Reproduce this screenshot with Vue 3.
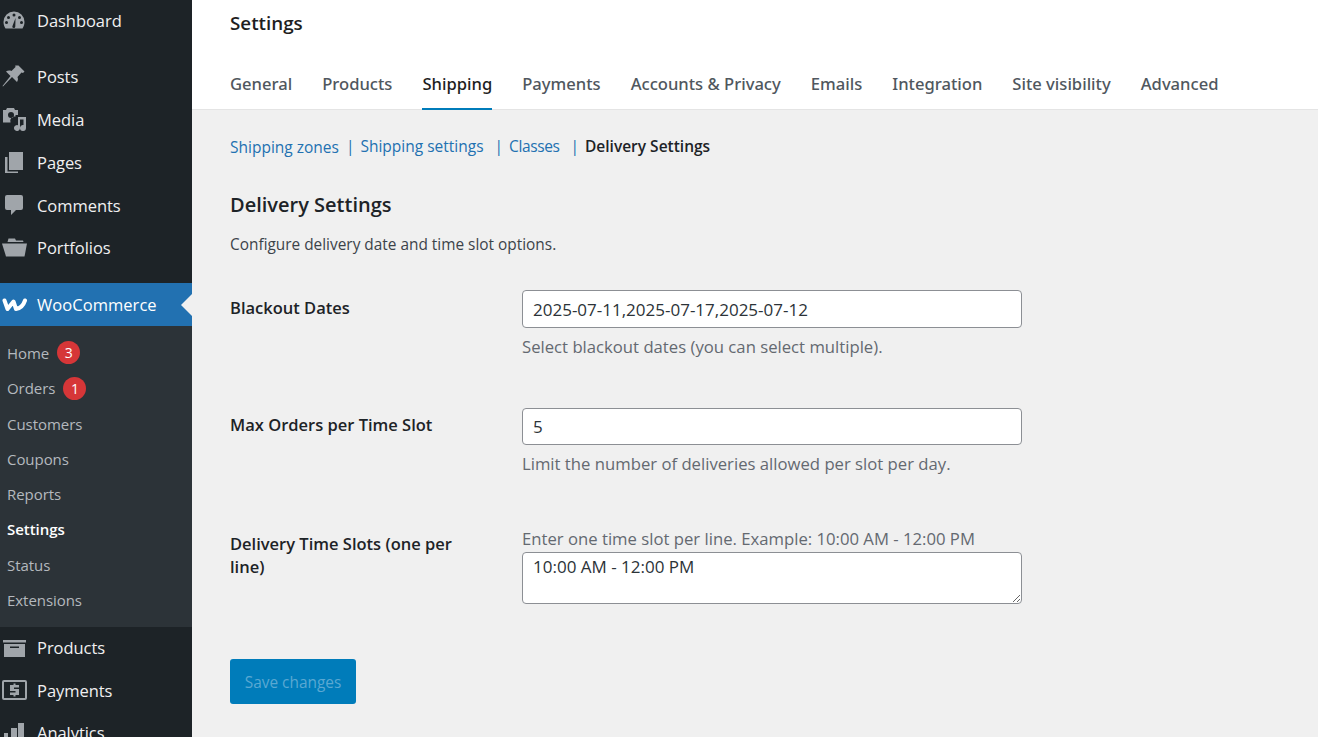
<template>
  <div class="page">
    <!-- admin sidebar -->
    <aside class="sidebar">
      <ul class="menu">
        <li v-for="item in topItems" :key="item.name" class="menu-item">
          <span class="menu-icon">
            <svg width="26" height="24" viewBox="0 0 26 24" fill="#a0a5aa" v-html="item.icon"></svg>
          </span>
          {{ item.name }}
        </li>
      </ul>
      <div class="menu-current">
        <span class="menu-icon">
          <svg width="26" height="16" viewBox="0 0 26 16" fill="none" stroke="#fff" stroke-width="4" stroke-linecap="round" stroke-linejoin="round">
            <path d="M2.500 3.500L5.500 12L11.500 4.500L14 12Q20.500 11 23 3.500" />
          </svg>
        </span>
        WooCommerce
        <span class="current-arrow"></span>
      </div>
      <ul class="submenu">
        <li
          v-for="sub in subItems"
          :key="sub.name"
          class="submenu-item"
          :class="{ active: sub.name === 'Settings' }"
        >
          {{ sub.name }}
          <span v-if="sub.count" class="badge">{{ sub.count }}</span>
        </li>
      </ul>
      <ul class="menu bottom">
        <li v-for="item in bottomItems" :key="item.name" class="menu-item">
          <span class="menu-icon">
            <svg width="26" height="24" viewBox="0 0 26 24" fill="#a0a5aa" v-html="item.icon"></svg>
          </span>
          {{ item.name }}
        </li>
      </ul>
    </aside>

    <main class="main">
      <header class="top">
        <h1 class="top-title">Settings</h1>
        <nav class="tabs">
          <a v-for="tab in tabs" :key="tab" class="tab" :class="{ active: tab === 'Shipping' }">{{ tab }}</a>
        </nav>
      </header>

      <div class="content">
        <div class="subnav">
          <a class="link zones">Shipping zones</a><span class="sep">|</span>
          <a class="link">Shipping settings</a><span class="sep wide">|</span>
          <a class="link classes">Classes</a><span class="sep wide">|</span>
          <strong class="current">Delivery Settings</strong>
        </div>

        <h2 class="section-title">Delivery Settings</h2>
        <p class="section-desc">Configure delivery date and time slot options.</p>

        <div class="form-row first">
          <label class="field-label">Blackout Dates</label>
          <div class="field">
            <input class="input" type="text" readonly value="2025-07-11,2025-07-17,2025-07-12" />
            <p class="hint">Select blackout dates (you can select multiple).</p>
          </div>
        </div>

        <div class="form-row second">
          <label class="field-label orders">Max Orders per Time Slot</label>
          <div class="field">
            <input class="input small" type="text" readonly value="5" />
            <p class="hint">Limit the number of deliveries allowed per slot per day.</p>
          </div>
        </div>

        <div class="form-row third">
          <label class="field-label slots">Delivery Time Slots (one per line)</label>
          <div class="field">
            <p class="hint above">Enter one time slot per line. Example: 10:00 AM - 12:00 PM</p>
            <textarea class="textarea" readonly>10:00 AM - 12:00 PM</textarea>
          </div>
        </div>

        <button class="save" type="button">Save changes</button>
      </div>
    </main>
  </div>
</template>

<script setup>
// sidebar icons, drawn by hand on a 26x24 box
const icons = {
  dashboard: '<path fill-rule="evenodd" d="M14 3.500a10.500 10.500 0 0 0-10.500 10.500c0 2.500.8 4.800 2 6.500h17c1.200-1.700 2-4 2-6.500a10.500 10.500 0 0 0-10.500-10.500zM14 5.500a1.500 1.500 0 1 1 0 3 1.500 1.500 0 0 1 0-3zM8.500 8a1.500 1.500 0 1 1 0 3 1.500 1.500 0 0 1 0-3zM19.500 8a1.500 1.500 0 1 1 0 3 1.500 1.500 0 0 1 0-3zM6.500 13a1.500 1.500 0 1 1 0 3 1.500 1.500 0 0 1 0-3zM21.500 13a1.500 1.500 0 1 1 0 3 1.500 1.500 0 0 1 0-3zM15.500 10l-.2 8.500a1.500 1.500 0 0 1-3 0z" transform="translate(-2 -1)"/>',
  posts: '<path d="M16.500.5l6 6-1.500 1.500-1.500-.5-4 4.500c.8 2 .5 3.500-.5 5l-5-5-9 9.500-.5-.5 8-10-4.500-4.500c1.500-1 3.500-1.300 5.500-.5l4-4-.3-1.500z"/>',
  media: '<path fill-rule="evenodd" d="M1 3h3l1-2h7l1 2h3v5h-2.500v1.500a4.500 4.500 0 0 0-5 6H1zM9 5a3 3 0 1 0 0 6 3 3 0 0 0 0-6z"/><path d="M16 10h8v11a3 3 0 1 1-2.500-3v-5.500H18V21a3 3 0 1 1-2-2.800z"/>',
  pages: '<path d="M7 2h14v18H7z"/><path d="M3 7h2.500v14.500H16V23H3z"/>',
  comments: '<path d="M5 2h14a2 2 0 0 1 2 2v11a2 2 0 0 1-2 2h-5l-5 5v-5H5a2 2 0 0 1-2-2V4a2 2 0 0 1 2-2z"/>',
  portfolios: '<path d="M5.500 6l1-3.500H13l1 2h7l.5 1.500z"/><path d="M0 7.500h25l-2.500 13H4z"/>',
  products: '<path d="M1 4h23v2.500H1z"/><path fill-rule="evenodd" d="M2 8h21v13H2zM8 10.500V12h9v-1.500z"/>',
  payments: '<path fill-rule="evenodd" d="M2 2h21a2 2 0 0 1 2 2v16a2 2 0 0 1-2 2H2a2 2 0 0 1-2-2V4a2 2 0 0 1 2-2zM2 4v16h21V4z"/><path d="M11.500 5.500h2V7H17v2.500h-5V11h5v6h-3.500v1.500h-2V17H8v-2.500h5.500V13H8V7h3.500z"/>',
  analytics: '<path d="M2 12h4v12H2zM9 7h6v17H9zM16 2h6v22h-6z"/>'
}

const topItems = [
  { name: 'Dashboard', icon: icons.dashboard },
  { name: 'Posts', icon: icons.posts },
  { name: 'Media', icon: icons.media },
  { name: 'Pages', icon: icons.pages },
  { name: 'Comments', icon: icons.comments },
  { name: 'Portfolios', icon: icons.portfolios }
]

const bottomItems = [
  { name: 'Products', icon: icons.products },
  { name: 'Payments', icon: icons.payments },
  { name: 'Analytics', icon: icons.analytics }
]

const subItems = [
  { name: 'Home', count: 3 },
  { name: 'Orders', count: 1 },
  { name: 'Customers' },
  { name: 'Coupons' },
  { name: 'Reports' },
  { name: 'Settings' },
  { name: 'Status' },
  { name: 'Extensions' }
]

const tabs = [
  'General',
  'Products',
  'Shipping',
  'Payments',
  'Accounts & Privacy',
  'Emails',
  'Integration',
  'Site visibility',
  'Advanced'
]
</script>

<style>
html,
body {
  margin: 0;
  height: 737px;
  overflow: hidden;
}
</style>

<style scoped>
.page {
  display: flex;
  width: 1318px;
  height: 737px;
  overflow: hidden;
  background: #f0f0f0;
  font-family: "Open Sans", "Noto Sans", sans-serif;
  font-size: 16.5px;
  color: #3c434a;
}

/* 侧边栏 */
.sidebar {
  flex: 0 0 192px;
  height: 737px;
  overflow: hidden;
  background: #1d2327;
  color: #f0f0f1;
  letter-spacing: -0.05px;
}

.menu {
  list-style: none;
  margin: 0;
  padding: 0;
}

.menu-item {
  display: flex;
  align-items: center;
  height: 42.8px;
}

.menu-item:first-child {
  margin-top: -0.5px;
}

.sidebar > .menu:first-child .menu-item:nth-child(2) {
  margin-top: 13px;
}

.sidebar > .menu:first-child {
  margin-bottom: 14px;
}

.menu.bottom .menu-item {
  height: 42.5px;
}

.menu-icon {
  flex: 0 0 37px;
  display: flex;
  align-items: center;
  padding-left: 2px;
  box-sizing: border-box;
}

.menu-current {
  position: relative;
  display: flex;
  align-items: center;
  height: 43px;
  background: #2271b1;
  color: #fff;
  letter-spacing: 0.05px;
}

.current-arrow {
  position: absolute;
  right: 0;
  top: 50%;
  margin-top: -11px;
  border: 11px solid transparent;
  border-right-color: #f0f0f0;
}

.submenu {
  list-style: none;
  margin: 0;
  padding: 9px 0 9.5px;
  background: #2c3338;
}

.submenu-item {
  display: flex;
  align-items: center;
  height: 35.3px;
  padding-left: 7px;
  font-size: 15px;
  color: #b4b9be;
}

.submenu-item.active {
  color: #fff;
  font-weight: 600;
}

.badge {
  display: inline-flex;
  align-items: center;
  justify-content: center;
  width: 23px;
  height: 23px;
  margin-left: 8px;
  border-radius: 50%;
  background: #d63638;
  color: #fff;
  font-size: 14px;
}

/* 主区域 */
.main {
  flex: 1;
  min-width: 0;
  display: flex;
  flex-direction: column;
}

.top {
  height: 110px;
  box-sizing: border-box;
  padding: 10px 0 0 38px;
  background: #fff;
  border-bottom: 1px solid #e4e4e4;
}

.top-title {
  margin: 0;
  font-size: 18.8px;
  line-height: 26px;
  font-weight: 600;
  color: #1e1e1e;
}

.tabs {
  display: flex;
  gap: 30px;
  margin-top: 28px;
}

.tab {
  height: 46px;
  box-sizing: border-box;
  line-height: 40px;
  font-family: "Noto Sans", "Open Sans", sans-serif;
  font-size: 16.6px;
  font-weight: 500;
  color: #50575e;
}

.tab.active {
  color: #1e1e1e;
  border-bottom: 2px solid #007cba;
}

.content {
  flex: 1;
  padding: 25px 0 0 38px;
}

.subnav {
  display: flex;
  align-items: center;
  height: 22px;
  font-size: 15.5px;
  color: #2271b1;
}

.link {
  color: #2271b1;
}

.link.zones {
  margin-top: 2px;
}

.link.classes {
  letter-spacing: -0.4px;
}

.sep {
  margin: 0 6px 0 7px;
}

.sep.wide {
  margin: 0 6px 0 11px;
}

.current {
  font-weight: 600;
  color: #1d2327;
}

.section-title {
  margin: 34px 0 0;
  font-size: 20px;
  line-height: 28px;
  font-weight: 600;
  color: #1d2327;
}

.section-desc {
  margin: 15px 0 0;
  font-size: 15.4px;
  line-height: 22px;
}

.form-row {
  display: grid;
  grid-template-columns: 292px 500px;
}

.form-row.first {
  margin-top: 34px;
}

.form-row.second {
  margin-top: 50px;
}

.form-row.third {
  margin-top: 53px;
}

.field-label {
  padding-top: 6px;
  padding-right: 38px;
  font-weight: 600;
  line-height: 23px;
  color: #1d2327;
}

.field-label.orders {
  padding-top: 5px;
}

.field-label.slots {
  padding-top: 3.5px;
}

.input,
.textarea {
  display: block;
  width: 500px;
  box-sizing: border-box;
  margin: 0;
  border: 1px solid #8c8f94;
  border-radius: 4px;
  background: #fff;
  padding: 0 10px;
  font: inherit;
  font-size: 17px;
  color: #2c3338;
  outline: none;
}

.input {
  height: 38px;
}

.input.small {
  height: 37px;
}

.textarea {
  height: 52px;
  padding: 3px 10px;
  line-height: 22px;
  resize: vertical;
}

.hint {
  margin: 8px 0 0;
  font-size: 16.7px;
  line-height: 22px;
  color: #646970;
}

.hint.above {
  margin: 0 0 2px;
}

.save {
  display: block;
  width: 126px;
  height: 45px;
  margin-top: 55px;
  padding: 2px 0 0;
  border: 0;
  border-radius: 3px;
  background: #007cba;
  color: #5aa8d2;
  font: inherit;
  font-size: 15.4px;
}
</style>
